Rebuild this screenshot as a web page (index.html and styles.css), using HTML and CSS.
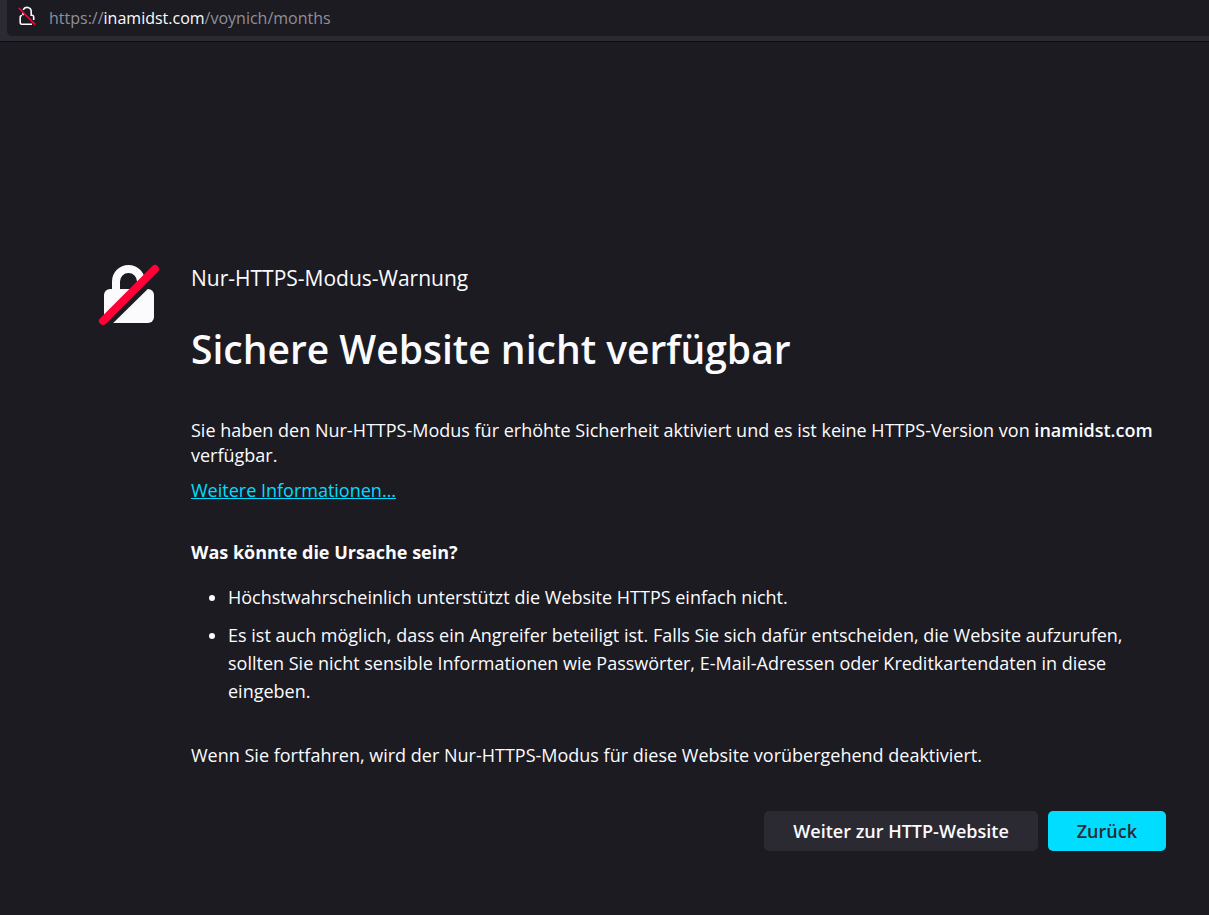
FILE: index.html
```html
<!DOCTYPE html>
<html lang="de">
<head>
<meta charset="utf-8">
<meta name="viewport" content="width=device-width, initial-scale=1">
<title>Nur-HTTPS-Modus-Warnung</title>
<link rel="stylesheet" href="styles.css">
</head>
<body>
<header class="toolbar">
  <div class="urlbar">
    <svg class="urlbar-icon" viewBox="0 0 18 22" aria-hidden="true">
      <path d="M5.200 4.800A4.200 4.200 0 0 1 13.200 6.800V10.300H14.200Q15.700 10.300 15.700 12V15M5 7.500V10.200M4 10.500Q2.200 10.500 2.200 12.500V17.500Q2.200 19.200 4 19.200H14" fill="none" stroke="#fbfbfe" stroke-width="1.600"/>
      <path d="M.8 3L17.200 19.600" stroke="#ff0039" stroke-width="1.600"/>
    </svg>
    <div class="url">https://<span class="url-host">inamidst.com</span>/voynich/months</div>
  </div>
</header>
<main class="warning">
  <svg class="warning-icon" viewBox="0 0 64 64" aria-hidden="true">
    <path d="M19 28V18.500A12.500 12.500 0 0 1 44 18.500V28" fill="none" stroke="#fbfbfe" stroke-width="8"/>
    <rect x="7" y="26" width="50" height="34" rx="6" fill="#fbfbfe"/>
    <path d="M5 64L64 6" stroke="#1c1b22" stroke-width="10"/>
    <path d="M6 58L58 6" stroke="#ff0039" stroke-width="8" stroke-linecap="round"/>
  </svg>
  <div class="content">
    <p class="kicker">Nur-HTTPS-Modus-Warnung</p>
    <h1 class="title">Sichere Website nicht verfügbar</h1>
    <p class="text">Sie haben den Nur-HTTPS-Modus für erhöhte Sicherheit aktiviert und es ist keine HTTPS-Version von <strong class="host">inamidst.com</strong> verfügbar.</p>
    <a class="more" href="#info">Weitere Informationen…</a>
    <h2 class="subtitle" id="info">Was könnte die Ursache sein?</h2>
    <ul class="causes">
      <li>Höchstwahrscheinlich unterstützt die Website HTTPS einfach nicht.</li>
      <li>Es ist auch möglich, dass ein Angreifer beteiligt ist. Falls Sie sich dafür entscheiden, die Website aufzurufen, sollten Sie nicht sensible Informationen wie Passwörter, E-Mail-Adressen oder Kreditkartendaten in diese eingeben.</li>
    </ul>
    <p class="text">Wenn Sie fortfahren, wird der Nur-HTTPS-Modus für diese Website vorübergehend deaktiviert.</p>
    <div class="actions">
      <button class="button" type="button">Weiter zur HTTP-Website</button>
      <button class="button button-primary" type="button">Zurück</button>
    </div>
  </div>
</main>
</body>
</html>
```
FILE: styles.css
```css
* { box-sizing: border-box; }
body {
  margin: 0;
  min-height: 100vh;
  background: #1c1b22;
  color: #fbfbfe;
  font-family: "Segoe UI", "Open Sans", "Noto Sans", sans-serif;
  font-size: 18px;
  line-height: 25px;
}
p, h1, h2, ul { margin: 0; }
.toolbar {
  padding: 0 0 5px 7px;
  background: #2b2a33;
  border-bottom: 1px solid #0c0c0d;
}
.urlbar {
  display: flex;
  align-items: center;
  gap: 13px;
  height: 36px;
  padding-left: 11px;
  background: #1c1b22;
  border-radius: 0 0 0 5px;
}
.urlbar-icon { width: 18px; height: 22px; margin-bottom: 4px; }
.url { color: #8f8f98; font-size: 16px; }
.url-host { color: #fbfbfe; }
.warning {
  display: flex;
  gap: 30px;
  padding: 221px 43px 64px 97px;
}
.warning-icon { flex: none; width: 64px; height: 64px; }
.content { flex: 1; }
.kicker { font-size: 21px; line-height: 30px; }
.title {
  margin: 29px 0 42px;
  font-size: 39px;
  font-weight: 600;
  line-height: 54px;
}
.host { font-weight: 600; }
.more {
  display: block;
  width: fit-content;
  margin-top: 10px;
  color: #00ddff;
}
.subtitle {
  margin-top: 37px;
  font-size: 18px;
  font-weight: 700;
  line-height: 25px;
}
.causes {
  margin: 18px 0 38px;
  padding-left: 37px;
  line-height: 28px;
}
.causes li + li { margin-top: 10px; }
.actions {
  display: flex;
  flex-wrap: wrap;
  justify-content: flex-end;
  gap: 10px;
  margin-top: 43px;
}
.button {
  min-height: 40px;
  padding: 0 29px;
  border: 0;
  border-radius: 5px;
  background: #2b2a33;
  color: #fbfbfe;
  font: inherit;
  font-weight: 600;
}
.button-primary { background: #00ddff; color: #2b2a33; }
```
